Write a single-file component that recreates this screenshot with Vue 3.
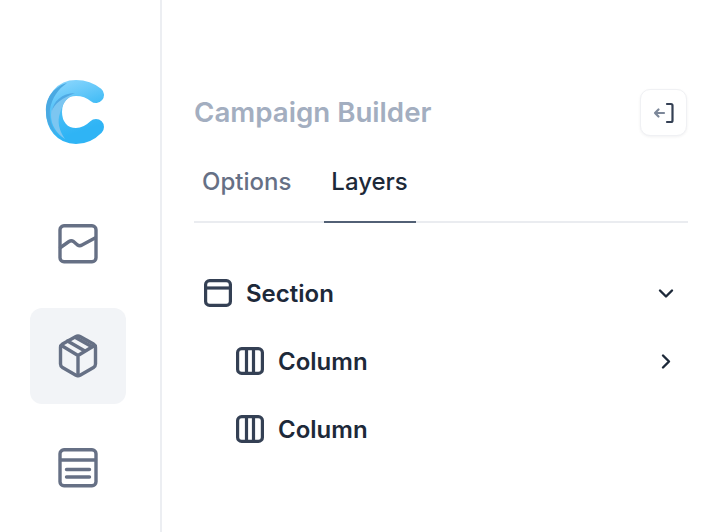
<template>
  <div class="app">
    <aside class="sidebar">
      <svg class="logo" width="64" height="68" viewBox="0 0 64 68">
        <defs>
          <linearGradient id="logoBody" x1="0" y1="0" x2="0.3" y2="1">
            <stop offset="0" stop-color="#80d2fc" />
            <stop offset="0.55" stop-color="#45bdf6" />
            <stop offset="1" stop-color="#2fb4f5" />
          </linearGradient>
        </defs>
        <path d="M54 17C48 12 41 10 34 10C20 10 12 21 12 34C12 47 20 58 34 58C41 58 48 55 54 49" fill="none" stroke="url(#logoBody)" stroke-width="16" stroke-linecap="round" />
        <path d="M30 17C17 19 9 27 9 37C9 47 14 55 23 61C17 52 15 44 18 35C20 27 24 21 30 17Z" fill="#7cc6f1" />
        <path d="M33 15C20 15 11 24 10 33C12 26 20 20 33 15Z" fill="#4fa9e4" />
        <path d="M25 5C11 9 3 21 4 34C4 44 9 52 15 57C9 48 7 40 8 31C10 20 16 11 25 5Z" fill="#4aa9e2" />
      </svg>
      <nav class="nav">
        <button v-for="item in navItems" :key="item.id" class="nav-item" :class="{ active: item.active }">
          <svg width="44" height="44" viewBox="0 0 44 44" fill="none" stroke="#667085" stroke-width="3.400" stroke-linecap="round" stroke-linejoin="round">
            <path v-for="(d, i) in item.paths" :key="i" :d="d" />
          </svg>
        </button>
      </nav>
    </aside>

    <main class="panel">
      <header class="panel-head">
        <h1>Campaign Builder</h1>
        <button class="collapse">
          <svg width="24" height="24" viewBox="0 0 24 24" fill="none" stroke-width="2.200" stroke-linecap="round" stroke-linejoin="round">
            <path d="M12 12H3M6.500 8.500 3 12l3.500 3.500" stroke="#7c8799" />
            <path d="M15 3h4a1.500 1.500 0 0 1 1.500 1.500v15A1.500 1.500 0 0 1 19 21h-4" stroke="#344054" />
          </svg>
        </button>
      </header>

      <div class="tabs">
        <button class="tab">Options</button>
        <button class="tab active">Layers</button>
      </div>

      <ul class="tree">
        <li class="row">
          <svg width="32" height="32" viewBox="0 0 32 32" fill="none" stroke="#344054" stroke-width="3.200" stroke-linejoin="round">
            <rect x="3.600" y="3.600" width="24.800" height="24.800" rx="4" />
            <path d="M3.600 11h24.800" />
          </svg>
          <span>Section</span>
          <svg class="chev" width="24" height="24" viewBox="0 0 24 24" fill="none" stroke="#1d2939" stroke-width="2.400" stroke-linecap="round" stroke-linejoin="round">
            <path d="M6 9.500l6 6 6-6" />
          </svg>
        </li>
        <li class="row child">
          <svg width="32" height="32" viewBox="0 0 32 32" fill="none" stroke="#344054" stroke-width="3.200" stroke-linejoin="round">
            <rect x="3.600" y="3.600" width="24.800" height="24.800" rx="4" />
            <path d="M12.500 3.600v24.800M19.500 3.600v24.800" />
          </svg>
          <span>Column</span>
          <svg class="chev" width="24" height="24" viewBox="0 0 24 24" fill="none" stroke="#1d2939" stroke-width="2.400" stroke-linecap="round" stroke-linejoin="round">
            <path d="M9 6.500l6 6-6 6" />
          </svg>
        </li>
        <li class="row child">
          <svg width="32" height="32" viewBox="0 0 32 32" fill="none" stroke="#344054" stroke-width="3.200" stroke-linejoin="round">
            <rect x="3.600" y="3.600" width="24.800" height="24.800" rx="4" />
            <path d="M12.500 3.600v24.800M19.500 3.600v24.800" />
          </svg>
          <span>Column</span>
        </li>
      </ul>
    </main>
  </div>
</template>

<script setup>
const navItems = [
  {
    id: 'charts',
    paths: [
      'M8 3.800h28a4 4 0 0 1 4 4v28a4 4 0 0 1-4 4H8a4 4 0 0 1-4-4v-28a4 4 0 0 1 4-4Z',
      'M4.500 25.500 13 19.500c1.500-1 3-1 4.500 0l4 3.500c1.500 1 3 1 4.500 0l13-7'
    ]
  },
  {
    id: 'blocks',
    active: true,
    paths: [
      'M19.500 2.800a5 5 0 0 1 5 0l13 7.200a4 4 0 0 1 2 3.500v16.500a4 4 0 0 1-2 3.500l-13 7.500a5 5 0 0 1-5 0l-13-7.500a4 4 0 0 1-2-3.500V13.500a4 4 0 0 1 2-3.500Z',
      'M5.500 11.500 22 21.500l16.500-10M22 21.500v20',
      'M11.500 7 28 16.500M19.500 3.500l16 9'
    ]
  },
  {
    id: 'pages',
    paths: [
      'M8 3.800h28a4 4 0 0 1 4 4v28a4 4 0 0 1-4 4H8a4 4 0 0 1-4-4v-28a4 4 0 0 1 4-4Z',
      'M4.500 14h35M10.500 23.500h23M10.500 31h23'
    ]
  }
]
</script>

<style>
html, body {
  margin: 0;
  background: #fff;
}
</style>

<style scoped>
.app {
  display: flex;
  width: 716px;
  height: 532px;
  overflow: hidden;
  font-family: Inter, "Liberation Sans", sans-serif;
  background: #fff;
}

.sidebar {
  box-sizing: border-box;
  width: 162px;
  flex: none;
  padding: 78px 0 0 30px;
  border-right: 2px solid #eceef2;
}

.logo {
  display: block;
  margin: 0 0 50px 12px;
}

.nav {
  display: flex;
  flex-direction: column;
  gap: 16px;
}

.nav-item {
  width: 96px;
  height: 96px;
  display: flex;
  align-items: center;
  justify-content: center;
  padding: 0;
  border: 0;
  border-radius: 12px;
  background: none;
}

.nav-item.active {
  background: #f2f4f7;
}

.panel {
  width: 494px;
  margin-left: 32px;
  padding-top: 89px;
}

.panel-head {
  display: flex;
  align-items: center;
  justify-content: space-between;
  height: 47px;
}

.panel-head h1 {
  margin: 0 0 2px;
  font-size: 27.700px;
  font-weight: 600;
  color: #a3aec0;
}

.collapse {
  width: 47px;
  height: 47px;
  margin-right: 1px;
  display: flex;
  align-items: center;
  justify-content: center;
  padding: 0;
  border: 1px solid #f0f1f4;
  border-radius: 10px;
  background: #fff;
  box-shadow: 0 1px 3px rgba(16, 24, 40, 0.06);
}

.tabs {
  display: flex;
  height: 64px;
  margin-top: 23px;
  border-bottom: 2px solid #eaecf0;
  box-sizing: border-box;
}

.tab {
  padding: 0 8px 18px;
  margin-bottom: -2px;
  font: 500 24px Inter, "Liberation Sans", sans-serif;
  color: #667085;
  border: 0;
  border-bottom: 2px solid transparent;
  background: none;
}

.tab + .tab {
  margin-left: 25px;
  padding-left: 7px;
}

.tab.active {
  color: #1d2939;
  border-bottom-color: #526075;
}

.tree {
  list-style: none;
  margin: 36px 0 0;
  padding: 0;
}

.row {
  display: flex;
  align-items: center;
  gap: 12px;
  height: 68px;
  padding: 0 8px;
  font-size: 24px;
  font-weight: 600;
  color: #1d2939;
}

.row.child {
  padding-left: 40px;
}

.chev {
  margin-left: auto;
  margin-right: 2px;
}
</style>
